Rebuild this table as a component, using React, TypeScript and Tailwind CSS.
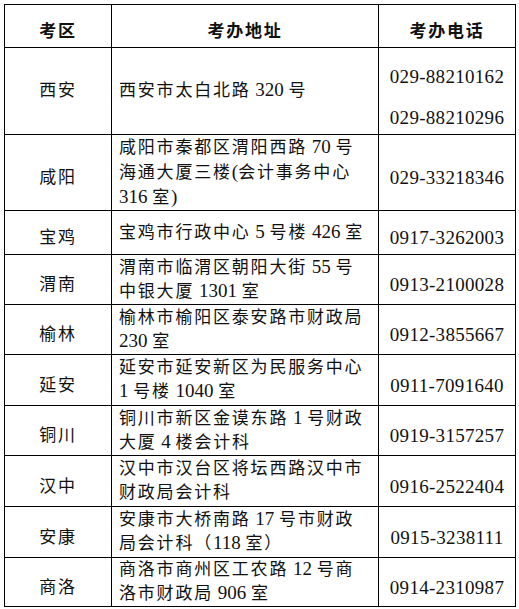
type Row = {
  city: string
  address: string[]
  phones: string[]
  h: number
}

const rows: Row[] = [
  { city: '西安', address: ['西安市太白北路 320 号'], phones: ['029-88210162', '029-88210296'], h: 87 },
  {
    city: '咸阳',
    address: ['咸阳市秦都区渭阳西路 70 号', '海通大厦三楼(会计事务中心', '316 室)'],
    phones: ['029-33218346'],
    h: 76,
  },
  { city: '宝鸡', address: ['宝鸡市行政中心 5 号楼 426 室'], phones: ['0917-3262003'], h: 44 },
  { city: '渭南', address: ['渭南市临渭区朝阳大街 55 号', '中银大厦 1301 室'], phones: ['0913-2100028'], h: 50 },
  { city: '榆林', address: ['榆林市榆阳区泰安路市财政局', '230 室'], phones: ['0912-3855667'], h: 50 },
  { city: '延安', address: ['延安市延安新区为民服务中心', '1 号楼 1040 室'], phones: ['0911-7091640'], h: 51 },
  { city: '铜川', address: ['铜川市新区金谟东路 1 号财政', '大厦 4 楼会计科'], phones: ['0919-3157257'], h: 50 },
  { city: '汉中', address: ['汉中市汉台区将坛西路汉中市', '财政局会计科'], phones: ['0916-2522404'], h: 51 },
  { city: '安康', address: ['安康市大桥南路 17 号市财政', '局会计科（118 室）'], phones: ['0915-3238111'], h: 51 },
  { city: '商洛', address: ['商洛市商州区工农路 12 号商', '洛市财政局 906 室'], phones: ['0914-2310987'], h: 49 },
]

// latin runs (digits, spaces, brackets) are set larger and without tracking, like Times next to SimSun
function Mixed({ text }: { text: string }) {
  const parts = text.split(/([\x20-\x7E]+)/).filter(Boolean)
  return (
    <>
      {parts.map((p, i) =>
        /^[\x20-\x7E]+$/.test(p) ? (
          <span key={i} className="text-[19px] leading-none tracking-normal">
            {p}
          </span>
        ) : (
          <span key={i} className="leading-none">
            {p}
          </span>
        ),
      )}
    </>
  )
}

function PhoneCell({ phones }: { phones: string[] }) {
  if (phones.length > 1) {
    return (
      <div className="flex flex-col items-center gap-[17px] pt-[13px]">
        {phones.map((p) => (
          <span key={p} className="leading-[24px] whitespace-nowrap">
            {p}
          </span>
        ))}
      </div>
    )
  }
  return <div className="pt-[11px] text-center leading-[24px] whitespace-nowrap">{phones[0]}</div>
}

export default function App() {
  return (
    <div className="w-[519px] h-[609px] bg-white pt-[4px] pl-[4px] font-['Liberation_Serif','Noto_Sans_CJK_SC',serif]">
      <table className="table-fixed border-collapse w-[511px] text-[17px] text-[#111] font-['Liberation_Serif','Noto_Sans_CJK_SC',serif]">
        <colgroup>
          <col className="w-[107px]" />
          <col className="w-[267px]" />
          <col className="w-[137px]" />
        </colgroup>
        <thead>
          <tr className="tracking-[1.8px]">
            <th className="h-[43px] border border-black text-center align-middle font-bold pt-[12px] leading-[20px]">
              考区
            </th>
            <th className="h-[43px] border border-black text-center align-middle font-bold pt-[12px] leading-[20px]">
              考办地址
            </th>
            <th className="h-[43px] border border-black text-center align-middle font-bold pt-[12px] leading-[20px]">
              考办电话
            </th>
          </tr>
        </thead>
        <tbody>
          {rows.map((r, i) => (
            <tr key={r.city} style={{ height: r.h }}>
              <td className="border border-black p-0 text-center align-middle tracking-[1.8px]">
                <div className={i === 0 ? 'leading-[24px]' : 'pt-[11px] leading-[24px]'}>{r.city}</div>
              </td>
              <td className="border border-black p-0 pl-[7px] align-middle tracking-[1.8px]">
                {r.address.map((line) => (
                  <div
                    key={line}
                    className={
                      r.address.length > 2
                        ? 'h-[25px] leading-[25px] whitespace-nowrap'
                        : 'h-[24px] leading-[24px] whitespace-nowrap'
                    }
                  >
                    <Mixed text={line} />
                  </div>
                ))}
              </td>
              <td className="border border-black p-0 align-middle text-[19px] tracking-[0.3px]">
                <PhoneCell phones={r.phones} />
              </td>
            </tr>
          ))}
        </tbody>
      </table>
    </div>
  )
}
